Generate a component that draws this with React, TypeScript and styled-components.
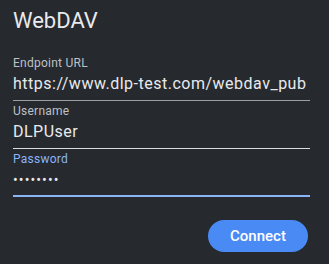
import styled, { createGlobalStyle } from 'styled-components';

const GlobalStyle = createGlobalStyle`
  html, body {
    margin: 0;
    padding: 0;
    background-color: #26292e;
  }
  * {
    box-sizing: border-box;
  }
`;

interface FieldData {
  label: string;
  value: string;
  secret?: boolean;
  focused?: boolean;
}

const fields: FieldData[] = [
  { label: 'Endpoint URL', value: 'https://www.dlp-test.com/webdav_pub' },
  { label: 'Username', value: 'DLPUser' },
  { label: 'Password', value: '••••••••', secret: true, focused: true },
];

const App = () => {
  return (
    <>
      <GlobalStyle />
      <Dialog>
        <Title>WebDAV</Title>
        <Form>
          {fields.map((field) => (
            <Field key={field.label} $focused={field.focused}>
              <Label $focused={field.focused}>{field.label}</Label>
              <Value $secret={field.secret}>{field.value}</Value>
            </Field>
          ))}
        </Form>
        <Actions>
          <ConnectButton type="button">Connect</ConnectButton>
        </Actions>
      </Dialog>
    </>
  );
};

const Dialog = styled.div`
  display: flex;
  flex-direction: column;
  width: 329px;
  height: 264px;
  padding: 7px 19px 0 13px;
  background-color: #26292e;
  font-family: Roboto, 'Noto Sans', sans-serif;
  color: #e8eaed;
`;

const Title = styled.div`
  font-size: 22px;
  line-height: 28px;
  font-weight: 400;
  color: #e8eaed;
`;

const Form = styled.div`
  display: flex;
  flex-direction: column;
  gap: 2px;
  margin-top: 20px;
`;

const Field = styled.div<{ $focused?: boolean }>`
  display: flex;
  flex-direction: column;
  padding-bottom: ${({ $focused }) => ($focused ? '3px' : '4px')};
  border-bottom: ${({ $focused }) =>
    $focused ? '2px solid #8ab4f8' : '1px solid #9aa0a6'};

  &:nth-child(2) {
    border-bottom-color: #dadce0;
  }
`;

const Label = styled.div<{ $focused?: boolean }>`
  font-size: 12px;
  line-height: 16px;
  letter-spacing: 0.25px;
  margin-bottom: 1px;
  color: ${({ $focused }) => ($focused ? '#8ab4f8' : '#bdc1c6')};
`;

const Value = styled.div<{ $secret?: boolean }>`
  font-size: ${({ $secret }) => ($secret ? '14px' : '16px')};
  line-height: 24px;
  letter-spacing: ${({ $secret }) => ($secret ? '1.1px' : '0.5px')};
  color: #e8eaed;
  white-space: nowrap;
  overflow: hidden;
`;

const Actions = styled.div`
  display: flex;
  justify-content: flex-end;
  margin-top: 23px;
  padding-right: 2px;
`;

const ConnectButton = styled.button`
  width: 100px;
  height: 32px;
  border: none;
  border-radius: 16px;
  background-color: #4a8af4;
  color: #ffffff;
  font-family: Roboto, 'Noto Sans', sans-serif;
  font-size: 15px;
  font-weight: 500;
  cursor: pointer;
`;

export default App;
